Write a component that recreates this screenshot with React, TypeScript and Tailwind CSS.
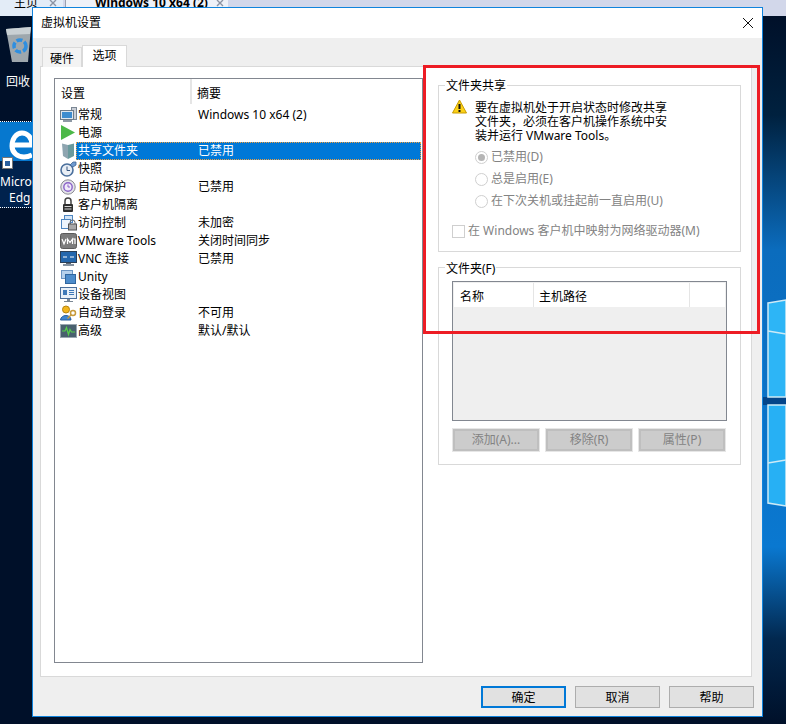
const rows = [
  { icon: "general", name: "常规", value: "Windows 10 x64 (2)" },
  { icon: "power", name: "电源", value: "" },
  { icon: "share", name: "共享文件夹", value: "已禁用", selected: true },
  { icon: "snapshot", name: "快照", value: "" },
  { icon: "autosave", name: "自动保护", value: "已禁用" },
  { icon: "lock", name: "客户机隔离", value: "" },
  { icon: "access", name: "访问控制", value: "未加密" },
  { icon: "vm", name: "VMware Tools", value: "关闭时间同步" },
  { icon: "vnc", name: "VNC 连接", value: "已禁用" },
  { icon: "unity", name: "Unity", value: "" },
  { icon: "device", name: "设备视图", value: "" },
  { icon: "login", name: "自动登录", value: "不可用" },
  { icon: "advanced", name: "高级", value: "默认/默认" },
];

function RowIcon({ kind }: { kind: string }) {
  if (kind === "general")
    return (
      <svg width="17" height="16" viewBox="0 0 17 16">
        <rect x="11.5" y="0.5" width="5" height="12" fill="#c9ced6" stroke="#7b8794" />
        <rect x="0.5" y="3.5" width="13" height="9" fill="#dfe6ee" stroke="#6d7a88" />
        <rect x="2" y="5" width="10" height="6" fill="#3d8ccf" />
        <rect x="3" y="13" width="9" height="2" fill="#8e99a5" />
      </svg>
    );
  if (kind === "power")
    return (
      <svg width="17" height="16" viewBox="0 0 17 16">
        <path d="M1 0 L15 7.5 L1 15 Z" fill="#4cb848" />
      </svg>
    );
  if (kind === "share")
    return (
      <svg width="17" height="16" viewBox="0 0 17 16">
        <path d="M2 0.5 L8 2 V16 L3 13 Z" fill="#8ea5b0" />
        <path d="M8 2 L14 0.5 V13 L8 16 Z" fill="#6a9a9c" />
      </svg>
    );
  if (kind === "snapshot")
    return (
      <svg width="17" height="16" viewBox="0 0 17 16">
        <circle cx="7" cy="9" r="6" fill="#e8eef5" stroke="#4a6f9c" strokeWidth="1.6" />
        <path d="M7 5.5 V9.5 H10" fill="none" stroke="#35557f" />
        <path d="M10 4 L13 1 H16 V4 L13 6 Z" fill="#6f9bd0" stroke="#3f6594" strokeWidth="0.8" />
      </svg>
    );
  if (kind === "autosave")
    return (
      <svg width="17" height="16" viewBox="0 0 17 16">
        <circle cx="8" cy="8" r="7.2" fill="#e4e4ea" stroke="#8a8a92" />
        <circle cx="8" cy="8" r="4.2" fill="#efeaf8" stroke="#8a63c8" strokeWidth="1.4" />
        <path d="M8 5.5 V8 H10" fill="none" stroke="#8a63c8" />
      </svg>
    );
  if (kind === "lock")
    return (
      <svg width="17" height="16" viewBox="0 0 17 16">
        <path d="M5 7 V4 a3 3 0 0 1 6 0 V7" fill="none" stroke="#444" strokeWidth="1.5" />
        <rect x="3" y="7" width="10" height="8" rx="1" fill="#2f2f2f" />
        <rect x="4.5" y="9" width="7" height="1" fill="#d8d8d8" />
        <rect x="4.5" y="11.5" width="7" height="1" fill="#d8d8d8" />
      </svg>
    );
  if (kind === "access")
    return (
      <svg width="17" height="16" viewBox="0 0 17 16">
        <rect x="4.5" y="0.5" width="8" height="7" fill="#d5e6f7" stroke="#4f86c0" />
        <rect x="1.5" y="4.5" width="9" height="9" fill="#eef5fc" stroke="#4f86c0" />
        <path d="M10 9 V7.5 a2.5 2.5 0 0 1 5 0 V9" fill="none" stroke="#666" />
        <rect x="8.5" y="9" width="8" height="6" fill="#a8a8a8" stroke="#555" />
      </svg>
    );
  if (kind === "vm")
    return (
      <svg width="17" height="16" viewBox="0 0 17 16">
        <rect x="0.5" y="0.5" width="16" height="15" rx="2" fill="#7c7c7c" stroke="#5a5a5a" />
        <path d="M2 6 L4 11 L6 6 M7.5 11 V6 L10 9.5 L12.5 6 V11 M12.5 6 H15 V11" fill="none" stroke="#fff" strokeWidth="1.2" />
      </svg>
    );
  if (kind === "vnc")
    return (
      <svg width="17" height="16" viewBox="0 0 17 16">
        <rect x="0.5" y="0.5" width="16" height="11" fill="#2467ad" stroke="#2b3f57" />
        <path d="M3 6 H7 M10 6 H14" stroke="#fff" />
        <rect x="6" y="12" width="5" height="1" fill="#5a6673" />
        <rect x="3" y="13" width="11" height="2" fill="#8592a0" />
      </svg>
    );
  if (kind === "unity")
    return (
      <svg width="17" height="16" viewBox="0 0 17 16">
        <rect x="1.5" y="1.5" width="11" height="8" fill="#b6d1ec" stroke="#6a94c2" />
        <rect x="5.5" y="5.5" width="10" height="9" fill="#4d8ccb" stroke="#2f669f" />
      </svg>
    );
  if (kind === "device")
    return (
      <svg width="17" height="16" viewBox="0 0 17 16">
        <rect x="0.5" y="0.5" width="16" height="11" fill="#e8f0f8" stroke="#4a6f9c" />
        <rect x="3" y="3" width="4" height="5" fill="#3f79b8" />
        <path d="M9 3.5 H14 M9 5.5 H14 M9 7.5 H14" stroke="#3f79b8" />
        <rect x="7" y="12" width="3" height="2" fill="#7a8794" />
        <rect x="4" y="14" width="9" height="1" fill="#7a8794" />
      </svg>
    );
  if (kind === "login")
    return (
      <svg width="17" height="16" viewBox="0 0 17 16">
        <circle cx="6" cy="4.5" r="3.5" fill="#f1b51c" stroke="#b5830f" />
        <path d="M0.5 15 C1 9 11 9 11 15 Z" fill="#3f86d2" stroke="#2a5f9e" />
        <circle cx="13" cy="8" r="2.5" fill="none" stroke="#c79a3a" strokeWidth="1.5" />
        <path d="M11 10 L7.5 13.5" stroke="#c79a3a" strokeWidth="1.5" />
      </svg>
    );
  return (
    <svg width="17" height="16" viewBox="0 0 17 16">
      <rect x="0.5" y="1.5" width="16" height="13" fill="#49606e" stroke="#9aa6b0" />
      <path d="M2 8 H5 L6.5 4.5 L8.5 11.5 L10 6.5 L11.5 9 H15" fill="none" stroke="#55d04a" strokeWidth="1.2" />
    </svg>
  );
}

function Radio({ label, checked }: { label: string; checked?: boolean }) {
  return (
    <div className="flex items-center h-[22px] text-[#838383]">
      <span className="w-[13px] h-[13px] rounded-full border border-[#cfcfcf] bg-white flex items-center justify-center mr-[3px]">
        {checked && <span className="w-[7px] h-[7px] rounded-full bg-[#b5b5b5]" />}
      </span>
      {label}
    </div>
  );
}

function DisabledButton({ label }: { label: string }) {
  return (
    <div className="w-[86px] h-[22px] bg-[#cccccc] border-2 border-[#bfbfbf] outline outline-1 outline-[#e6e6e6] flex items-center justify-center text-[#838383]">
      {label}
    </div>
  );
}

function FootButton({ label, primary }: { label: string; primary?: boolean }) {
  return (
    <div
      className={`w-[85px] h-[22px] bg-[#e1e1e1] flex items-center justify-center text-black pt-[2px] ${
        primary ? "border-2 border-[#0078d7]" : "border border-[#adadad]"
      }`}
    >
      {label}
    </div>
  );
}

function TabClose() {
  return (
    <svg width="8" height="8" viewBox="0 0 8 8">
      <path d="M1 0 L7 6 M7 0 L1 6" stroke="#8c93a3" strokeWidth="1.4" />
    </svg>
  );
}

export default function App() {
  return (
    <div
      className="relative w-[786px] h-[724px] overflow-hidden bg-[#001029] text-[12px]"
      style={{ fontFamily: '"Noto Sans", "Noto Sans CJK SC", sans-serif' }}
    >
      {/* vmware tab strip behind the dialog */}
      <div className="absolute left-0 top-0 w-full h-[16px] bg-[#d2d7ea] overflow-hidden flex items-start text-black">
        <div className="w-[63px] h-[16px] bg-[#e3ecf7] flex justify-between leading-[6px] pl-[14px] pr-[6px]">
          主页
          <TabClose />
        </div>
        <div className="ml-[2px] w-[163px] h-[16px] bg-[#eef1f8] border-l border-[#9aa0b0] flex justify-between font-bold leading-[6px] pl-[29px] pr-[4px]">
          Windows 10 x64 (2)
          <TabClose />
        </div>
      </div>

      {/* wallpaper on the right */}
      <svg
        width="24"
        height="708"
        viewBox="0 0 24 708"
        className="absolute left-[762px] top-[16px]"
      >
        <defs>
          <linearGradient id="wall" x1="0" y1="0" x2="0" y2="1">
            <stop offset="0" stopColor="#001029" />
            <stop offset="0.14" stopColor="#00213f" />
            <stop offset="0.33" stopColor="#0b6cbd" />
            <stop offset="0.75" stopColor="#0a78d0" />
            <stop offset="0.88" stopColor="#02284f" />
            <stop offset="1" stopColor="#001029" />
          </linearGradient>
        </defs>
        <rect width="24" height="708" fill="url(#wall)" />
        <rect y="381" width="24" height="8" fill="#03458a" />
        <path d="M6 287 L24 284 V381 H6 Z" fill="#2db5f6" stroke="#cdeaf6" strokeWidth="1.5" />
        <path d="M6 315 L24 318" stroke="#cdeaf6" strokeWidth="1.5" />
        <path d="M6 389 H24 V490 L6 487 Z" fill="#27b0f4" stroke="#cdeaf6" strokeWidth="1.5" />
        <path d="M6 447 L24 444" stroke="#cdeaf6" strokeWidth="1.5" />
      </svg>

      {/* desktop icons */}
      <svg width="28" height="38" viewBox="0 0 28 38" className="absolute left-[5px] top-[26px]">
        <path d="M1 3 L26 1 L23 36 L7 36 Z" fill="#9ea7ad" />
        <path d="M1 3 L26 1 L25 8 L2 9 Z" fill="#c9d0d4" />
        <circle cx="15" cy="20" r="6" fill="none" stroke="#2f8fe0" strokeWidth="3.5" strokeDasharray="6 2" />
      </svg>
      <div className="absolute left-[6px] top-[74px] text-white leading-[16px]">回收</div>
      <div className="absolute left-0 top-[121px] w-[33px] h-[87px] border-y border-dotted border-white bg-[#00224d] overflow-hidden text-white">
        <div className="h-[39px] bg-[#0678cf]" />
        <svg width="26" height="30" viewBox="0 0 26 30" className="absolute left-[9px] top-[8px]">
          <path
            d="M4 15 H23 C23 7 18 3 13 3 C7 3 3 9 3 16 C3 23 9 27 15 27 C18 27 21 26 23 25"
            fill="none"
            stroke="#fff"
            strokeWidth="5"
          />
        </svg>
        <div className="absolute left-[2px] top-[35px] w-[11px] h-[12px] bg-white border border-[#777] flex items-center justify-center">
          <span className="w-[5px] h-[5px] bg-[#2a5f9e]" />
        </div>
        <div className="absolute left-0 top-[52px] leading-[16px]">Micros</div>
        <div className="absolute left-[9px] top-[68px] leading-[16px]">Edg</div>
      </div>

      {/* dialog */}
      <div className="absolute left-[32px] top-[7px] w-[731px] h-[710px] border border-[#1083dc] bg-[#efefef] flex flex-col">
        <div className="h-[30px] shrink-0 bg-white flex items-center justify-between pl-[8px] pr-[8px] text-black">
          <span>虚拟机设置</span>
          <svg width="12" height="12" viewBox="0 0 12 12">
            <path d="M1 1 L11 11 M11 1 L1 11" stroke="#111" strokeWidth="1" />
          </svg>
        </div>

        <div className="flex items-end pl-[9px] h-[29px] shrink-0 -mb-px text-black relative z-10">
          <div className="w-[40px] h-[20px] bg-[#f3f3f3] border border-b-0 border-[#d9d9d9] text-center leading-[21px]">
            硬件
          </div>
          <div className="w-[45px] h-[22px] bg-white border border-b-0 border-[#d9d9d9] text-center leading-[20px]">
            选项
          </div>
        </div>

        <div className="ml-[7px] w-[712px] h-[611px] shrink-0 bg-white border border-[#d9d9d9] flex pl-[13px] pt-[11px] gap-[15px]">
          {/* left list */}
          <div className="w-[369px] h-[585px] shrink-0 border border-[#828790] text-black">
            <div className="h-[27px] flex">
              <div className="w-[137px] h-[25px] border-r-2 border-[#e5e5e5] pl-[6px] leading-[29px]">设置</div>
              <div className="pl-[5px] leading-[29px]">摘要</div>
            </div>
            <div className="pl-[5px] pr-px">
              {rows.map((r) => (
                <div key={r.name} className="flex items-center h-[18px]">
                  <span className="w-[16px] h-[16px] shrink-0">
                    <RowIcon kind={r.icon} />
                  </span>
                  <div
                    className={`flex-1 flex h-[18px] leading-[18px] ${
                      r.selected ? "bg-[#0078d7] text-white outline-1 -outline-offset-1 outline-dotted outline-[#f0a040]" : ""
                    }`}
                  >
                    <span className="w-[122px] pl-[2px]">{r.name}</span>
                    <span>{r.value}</span>
                  </div>
                </div>
              ))}
            </div>
          </div>

          {/* right panel */}
          <div className="w-[303px] shrink-0 pt-[7px]">
            <div className="relative h-[167px] border border-[#d9d9d9] pl-[13px] pt-[15px]">
              <span className="absolute left-[6px] top-[-9px] bg-white px-px leading-[17px] text-black">
                文件夹共享
              </span>
              <div className="flex">
                <svg width="15" height="15" viewBox="0 0 15 15" className="-mt-[2px] shrink-0">
                  <path d="M7.5 1 L14.5 14 H0.5 Z" fill="#fcd116" stroke="#c79a00" strokeLinejoin="round" />
                  <path d="M7.5 5 V10 M7.5 11 V13" stroke="#111" strokeWidth="2" />
                </svg>
                <p className="ml-[8px] leading-[14px] text-black">
                  要在虚拟机处于开启状态时修改共享
                  <br />
                  文件夹，必须在客户机操作系统中安
                  <br />
                  装并运行 VMware Tools。
                </p>
              </div>
              <div className="mt-[3px] ml-[23px]">
                <Radio label="已禁用(D)" checked />
                <Radio label="总是启用(E)" />
                <Radio label="在下次关机或挂起前一直启用(U)" />
              </div>
              <div className="flex items-center mt-[10px] text-[#838383]">
                <span className="w-[13px] h-[13px] border border-[#cfcfcf] bg-white mr-[3px]" />
                在 Windows 客户机中映射为网络驱动器(M)
              </div>
            </div>

            <div className="relative mt-[15px] h-[198px] border border-[#d9d9d9] pl-[13px] pt-[13px]">
              <span className="absolute left-[6px] top-[-8px] bg-white px-px leading-[17px] text-black">
                文件夹(F)
              </span>
              <div className="w-[275px] h-[140px] border border-[#828790] bg-[#efefef]">
                <div className="h-[24px] mx-px mt-px bg-white flex text-black leading-[27px]">
                  <div className="w-[80px] border-r border-[#e5e5e5] pl-[6px]">名称</div>
                  <div className="w-[156px] border-r border-[#e5e5e5] pl-[5px]">主机路径</div>
                </div>
              </div>
              <div className="flex gap-[7px] mt-[8px] ml-px">
                <DisabledButton label="添加(A)..." />
                <DisabledButton label="移除(R)" />
                <DisabledButton label="属性(P)" />
              </div>
            </div>
          </div>
        </div>

        <div className="flex justify-end gap-[9px] pr-[8px] pt-[9px]">
          <FootButton label="确定" primary />
          <FootButton label="取消" />
          <FootButton label="帮助" />
        </div>
      </div>

      {/* red annotation box over the screenshot */}
      <div className="absolute left-[423px] top-[65px] w-[337px] h-[269px] border-[3px] border-[#ed1c24]" />
    </div>
  );
}
